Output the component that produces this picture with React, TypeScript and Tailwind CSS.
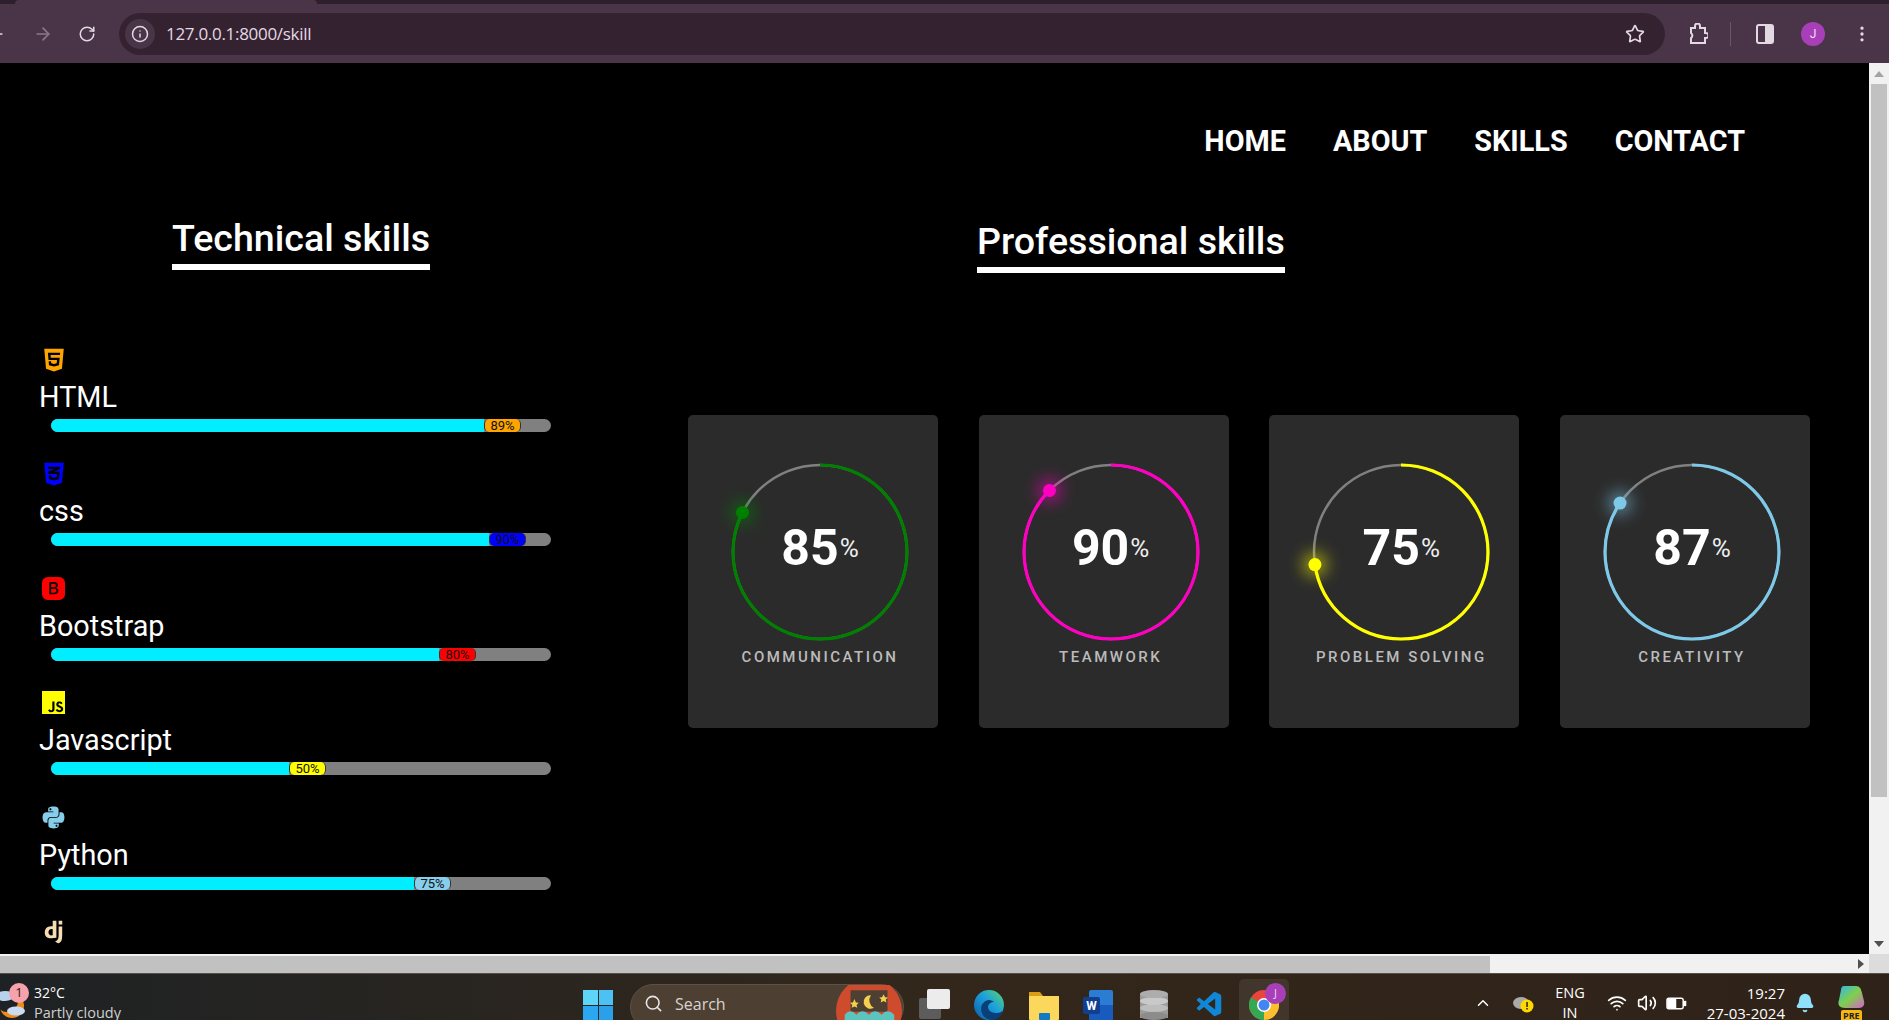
import { ArrowLeft, ArrowRight, RotateCw, Info, Star, MoreVertical, Search, ChevronUp, Wifi, Volume2, Bell } from 'lucide-react';
import { FaHtml5, FaCss3Alt, FaPython } from 'react-icons/fa';
import { BsBootstrapFill } from 'react-icons/bs';
import { SiJavascript } from 'react-icons/si';
import { BiLogoDjango } from 'react-icons/bi';
import { VscVscode } from 'react-icons/vsc';

const skills = [
  { name: 'HTML', pct: 89, icon: <FaHtml5 className="h-[26px] w-[26px] text-[#ffa500]" />, badge: 'bg-[#ffa500]' },
  { name: 'css', pct: 90, icon: <FaCss3Alt className="h-[26px] w-[26px] text-[#0000ff]" />, badge: 'bg-[#0000ff]' },
  { name: 'Bootstrap', pct: 80, icon: <BsBootstrapFill className="h-[23px] w-[23px] text-[#ff0000]" />, badge: 'bg-[#ff0000]' },
  { name: 'Javascript', pct: 50, icon: <SiJavascript className="h-[23px] w-[23px] text-[#ffff00]" />, badge: 'bg-[#ffff00]' },
  { name: 'Python', pct: 75, icon: <FaPython className="h-[25px] w-[25px] text-[#87ceeb]" />, badge: 'bg-[#87ceeb]' },
];

const cards = [
  { name: 'COMMUNICATION', pct: 85, shown: 82.5, color: '#008000' },
  { name: 'TEAMWORK', pct: 90, shown: 87.5, color: '#ff00c3' },
  { name: 'PROBLEM SOLVING', pct: 75, shown: 72.7, color: '#ffff00' },
  { name: 'CREATIVITY', pct: 87, shown: 84.5, color: '#7ec8e8' },
];

function SkillRow({ name, pct, icon, badge }: { name: string; pct: number; icon: React.ReactNode; badge: string }) {
  return (
    <div className="h-[114.4px] shrink-0">
      <div className="ml-[1px] flex h-[23px] w-[27px] items-center justify-center">{icon}</div>
      <div className="mt-[9px] text-[28.8px] leading-[34px] text-white">{name}</div>
      <div className="ml-[12px] mt-[5px] flex h-[13px] w-[500px] overflow-hidden rounded-full bg-[#808080]">
        <div className="h-full bg-[#00eeff]" style={{ width: pct * 5 - 12 }} />
        <div className={`flex h-full w-[37px] items-center justify-center rounded-[5px] border-x border-[#333] text-[13px] leading-none text-[#111] ${badge}`}>
          {pct}%
        </div>
      </div>
    </div>
  );
}

function SkillCard({ name, pct, shown, color }: { name: string; pct: number; shown: number; color: string }) {
  const angle = (shown / 100) * Math.PI * 2;
  const dotX = 89 + Math.sin(angle) * 87;
  const dotY = 89 - Math.cos(angle) * 87;
  return (
    <div className="h-[313px] w-[250px] shrink-0 rounded-[5px] bg-[#2b2b2b] pl-[43px] pt-[48px]">
      <div className="relative h-[178px] w-[178px]">
        <svg viewBox="0 0 178 178" className="h-[178px] w-[178px] overflow-visible">
          <circle cx="89" cy="89" r="87" fill="none" stroke="#808080" strokeWidth="2.5" />
          <circle
            cx="89"
            cy="89"
            r="87"
            fill="none"
            stroke={color}
            strokeWidth="3.2"
            pathLength={100}
            strokeDasharray={`${shown} 100`}
            transform="rotate(-90 89 89)"
          />
          <circle cx={dotX} cy={dotY} r="12" fill={color} opacity="0.55" className="blur-[8px]" />
          <circle cx={dotX} cy={dotY} r="6.5" fill={color} />
        </svg>
        <div className="absolute inset-0 flex items-center justify-center pb-[8px] text-white">
          <span className="text-[50px] font-bold leading-none">{pct}</span>
          <span className="ml-[1px] text-[26px] leading-none text-[#eee]">%</span>
        </div>
      </div>
      <div className="mt-[6px] w-[178px] whitespace-nowrap text-center text-[15px] font-medium leading-[20px] tracking-[2.5px] text-[#bbb]">{name}</div>
    </div>
  );
}

function ChromeBar() {
  return (
    <div className="h-[63px] shrink-0 bg-[#4a3548] text-[#e3d9e1]">
      <div className="h-[4px] bg-[#2e1f2d] pl-[15px]">
        <div className="h-full w-[302px] rounded-t-[4px] bg-[#4a3548]" />
      </div>
      <div className="flex h-[59px] items-center">
        <ArrowLeft className="ml-[-14px] h-[20px] w-[20px]" />
        <ArrowRight className="ml-[27px] h-[20px] w-[20px] text-[#8a7888]" />
        <RotateCw className="ml-[25px] h-[18px] w-[18px]" />
        <div className="ml-[23px] flex h-[42px] w-[1546px] items-center rounded-full bg-[#352231] pl-[6px]">
          <div className="flex h-[30px] w-[30px] items-center justify-center rounded-full bg-[#4a3548]">
            <Info className="h-[18px] w-[18px]" />
          </div>
          <span className="ml-[11px] font-['Open_Sans',sans-serif] text-[17px] tracking-[-0.3px]">127.0.0.1:8000/skill</span>
          <Star className="ml-auto mr-[20px] h-[20px] w-[20px]" />
        </div>
        <svg viewBox="0 0 20 22" className="ml-[23px] h-[22px] w-[20px]" fill="none" stroke="currentColor" strokeWidth="2">
          <path d="M3 5h4V3a2 2 0 0 1 5 0v2h5v5h1a2 2 0 0 1 0 5h-1v5H3v-5a3 3 0 0 0 0-5z" />
        </svg>
        <div className="ml-[22px] h-[24px] w-px bg-[#6a5668]" />
        <svg viewBox="0 0 18 20" className="ml-[25px] h-[20px] w-[18px]">
          <rect x="1" y="1" width="16" height="18" rx="2" fill="none" stroke="currentColor" strokeWidth="2" />
          <rect x="9" y="1" width="8" height="18" fill="currentColor" />
        </svg>
        <div className="ml-[27px] flex h-[24px] w-[24px] items-center justify-center rounded-full bg-[#a93fb8] text-[12px] text-[#f4dff6]">J</div>
        <MoreVertical className="ml-[27px] h-[20px] w-[20px]" />
      </div>
    </div>
  );
}

function Taskbar() {
  return (
    <div className="flex h-[46px] shrink-0 items-start overflow-hidden bg-gradient-to-r from-[#1e2224] via-[#33271b] to-[#2f2219] font-['Open_Sans',sans-serif] text-white">
      {/* weather */}
      <div className="relative h-full w-[140px] shrink-0">
        <svg viewBox="0 0 30 36" className="absolute left-0 top-[10px] h-[36px] w-[30px]">
          <circle cx="12" cy="22" r="12" fill="#f08a1d" />
          <circle cx="7" cy="17" r="11" fill="#1f2224" />
          <ellipse cx="5" cy="12" rx="9" ry="5" fill="#b8d2ee" />
          <ellipse cx="16" cy="27" rx="9" ry="4.5" fill="#c9dcf3" />
        </svg>
        <div className="absolute left-[9px] top-[9px] flex h-[20px] w-[20px] items-center justify-center rounded-full bg-[#f7a1ac] text-[13px] text-[#222]">1</div>
        <div className="absolute left-[34px] top-[9px] whitespace-nowrap text-[14px] leading-[20px]">32°C</div>
        <div className="absolute left-[34px] top-[29px] whitespace-nowrap text-[14.5px] leading-[20px] text-[#cfcfcf]">Partly cloudy</div>
      </div>
      {/* start + search */}
      <div className="ml-[443px] mt-[16px] grid h-[30px] w-[30px] shrink-0 grid-cols-2 gap-[1px]">
        <div className="bg-[#5fd4f9]" />
        <div className="bg-[#4cc2f4]" />
        <div className="bg-[#2aa7ee]" />
        <div className="bg-[#2aa0ea]" />
      </div>
      <div className="ml-[17px] mt-[10px] flex h-[46px] w-[274px] shrink-0 items-start rounded-full border border-[#5e5142] bg-[#4d4033] pl-[13px] pt-[9px]">
        <Search className="h-[19px] w-[19px] text-[#e8e8e8]" />
        <span className="ml-[12px] text-[16px] leading-[20px] text-[#d8d4ce]">Search</span>
        <svg viewBox="0 0 70 36" className="ml-auto mr-0 mt-[-9px] h-[36px] w-[68px]">
          <circle cx="35" cy="26" r="34" fill="#cf4b2d" />
          <path d="M16 5h38v22H16z" fill="#4d4033" />
          <path d="M37 10a7 7 0 1 0 3 13 9 9 0 0 1-3-13z" fill="#f5cf4f" />
          <path d="M20 14l1.500 3.500 3 .3-2.300 2.200.7 3-2.900-1.500-2.900 1.500.7-3-2.300-2.200 3-.3zM50 9l1.500 3 3 .4-2.200 2 .6 3-2.900-1.400-2.900 1.400.6-3-2.200-2 3-.4z" fill="#f5cf4f" />
          <path d="M10 30q6-7 12 0q6-7 13 0q6-7 13 0q6-7 13 0v10H10z" fill="#5cc4bf" />
        </svg>
      </div>
      {/* pinned apps */}
      <svg viewBox="0 0 32 30" className="ml-[15px] mt-[15px] h-[30px] w-[32px] shrink-0">
        <rect x="0" y="9" width="22" height="21" rx="2" fill="#5c5c5c" />
        <rect x="8" y="0" width="23" height="20" rx="2" fill="#ececec" />
      </svg>
      <svg viewBox="0 0 30 30" className="ml-[23px] mt-[16px] h-[30px] w-[30px] shrink-0">
        <defs>
          <linearGradient id="edgeFill" x1="0" y1="1" x2="1" y2="0">
            <stop offset="0" stopColor="#0c59a4" />
            <stop offset="0.55" stopColor="#1ba0dd" />
            <stop offset="1" stopColor="#5fd66b" />
          </linearGradient>
        </defs>
        <circle cx="15" cy="15" r="15" fill="url(#edgeFill)" />
        <path d="M30 17c0 4-4 6-8 6-5 0-8-3-8-6 0-3 3-5 6-5-1-1-3-2-5-2-4 0-8 4-8 9 0 4 3 11 11 11 4 0 7-2 9-5z" fill="#0a3f78" />
      </svg>
      <svg viewBox="0 0 30 30" className="ml-[25px] mt-[16px] h-[30px] w-[30px] shrink-0">
        <path d="M0 2h11l3 4H30v5H0z" fill="#d99e16" />
        <rect x="0" y="6" width="30" height="24" rx="1" fill="#fbd75b" />
        <rect x="10" y="23" width="11" height="7" rx="1" fill="#1479c4" />
      </svg>
      <svg viewBox="0 0 30 30" className="ml-[24px] mt-[16px] h-[30px] w-[30px] shrink-0">
        <rect x="6" y="0" width="24" height="30" rx="2" fill="#2b7cd3" />
        <rect x="6" y="15" width="24" height="15" fill="#185abd" />
        <rect x="0" y="7" width="17" height="17" rx="2" fill="#103f91" />
        <text x="8.500" y="20" textAnchor="middle" fontSize="12" fontWeight="700" fill="#fff" fontFamily="Roboto, sans-serif">W</text>
      </svg>
      <svg viewBox="0 0 30 30" className="ml-[26px] mt-[16px] h-[30px] w-[30px] shrink-0">
        <rect x="1" y="4" width="28" height="24" fill="#9b9b9b" />
        <ellipse cx="15" cy="26" rx="14" ry="4" fill="#8c8c8c" />
        <ellipse cx="15" cy="18" rx="14" ry="4" fill="#bdbdbd" />
        <ellipse cx="15" cy="11" rx="14" ry="4" fill="#c9c9c9" />
        <ellipse cx="15" cy="4" rx="14" ry="4" fill="#adadad" />
      </svg>
      <VscVscode className="ml-[26px] mt-[16px] h-[30px] w-[30px] shrink-0 text-[#0f86d6]" />
      <div className="relative ml-[14px] mt-[5px] h-[41px] w-[50px] shrink-0 rounded-t-[5px] bg-[#ffffff14]">
        <svg viewBox="0 0 30 30" className="absolute left-[10px] top-[11px] h-[30px] w-[30px]">
          <circle cx="15" cy="15" r="15" fill="#e8453c" />
          <path d="M15 15L2 22.500A15 15 0 0 0 15 30z" fill="#34a853" />
          <path d="M2 22.500A15 15 0 0 1 2 7.500L15 15z" fill="#34a853" />
          <path d="M15 15L15 30A15 15 0 0 0 28 7.500z" fill="#fbc02d" />
          <circle cx="15" cy="15" r="7" fill="#fff" />
          <circle cx="15" cy="15" r="5.500" fill="#4285f4" />
        </svg>
        <div className="absolute left-[26px] top-[4px] flex h-[21px] w-[21px] items-center justify-center rounded-full bg-[#a93fb8] text-[11px] text-[#f0d5f3]">J</div>
      </div>
      {/* tray */}
      <ChevronUp className="ml-[185px] mt-[20px] h-[18px] w-[18px] shrink-0" />
      <svg viewBox="0 0 22 20" className="ml-[20px] mt-[19px] h-[20px] w-[22px] shrink-0">
        <ellipse cx="9" cy="10" rx="8" ry="6" fill="#a9a9a9" />
        <circle cx="15" cy="13" r="6.500" fill="#ffd800" />
        <rect x="14.300" y="9" width="1.500" height="5" fill="#222" />
        <rect x="14.300" y="15" width="1.500" height="1.500" fill="#222" />
      </svg>
      <div className="ml-[20px] mt-[9px] w-[32px] shrink-0 text-center text-[14.5px] leading-[20px]">
        <div>ENG</div>
        <div>IN</div>
      </div>
      <Wifi className="ml-[21px] mt-[19px] h-[20px] w-[20px] shrink-0" />
      <Volume2 className="ml-[10px] mt-[19px] h-[20px] w-[20px] shrink-0" />
      <svg viewBox="0 0 22 16" className="ml-[9px] mt-[21px] h-[16px] w-[21px] shrink-0" fill="none" stroke="#fff" strokeWidth="1.500">
        <rect x="1" y="3" width="17" height="11" rx="2" />
        <rect x="18.500" y="6.500" width="2" height="4" fill="#fff" />
        <path d="M2 4h8v9H2z" fill="#fff" />
      </svg>
      <div className="ml-[18px] mt-[9px] w-[80px] shrink-0 whitespace-nowrap text-right text-[15px] leading-[20px]">
        <div>19:27</div>
        <div>27-03-2024</div>
      </div>
      <Bell className="ml-[10px] mt-[19px] h-[20px] w-[20px] shrink-0 fill-[#8ee0fb] text-[#8ee0fb]" />
      <div className="relative ml-[21px] mt-[10px] h-[30px] w-[30px] shrink-0">
        <svg viewBox="0 0 30 28" className="h-[28px] w-[30px]">
          <defs>
            <linearGradient id="copilotFill" x1="0" y1="0" x2="1" y2="1">
              <stop offset="0" stopColor="#2fb5f0" />
              <stop offset="0.5" stopColor="#7fd04a" />
              <stop offset="1" stopColor="#d85fd0" />
            </linearGradient>
          </defs>
          <path d="M8 2h12c4 0 5 3 6 7l2 8c1 4-1 7-5 7H9c-5 0-8-3-6-8l2-10c0-2 1-4 3-4z" fill="url(#copilotFill)" />
        </svg>
        <div className="absolute bottom-[-8px] left-[5px] rounded-[2px] bg-[#f7b90f] px-[2px] text-[9px] font-bold leading-[12px] text-[#222]">PRE</div>
      </div>
    </div>
  );
}

export default function App() {
  return (
    <div className="flex h-[1020px] w-full flex-col overflow-hidden bg-black font-['Roboto',sans-serif]">
      <ChromeBar />

      <div className="flex min-h-0 flex-1">
        <div className="min-w-0 flex-1 overflow-hidden bg-black">
          {/* Nav */}
          <nav className="flex h-[95px] items-end justify-end gap-[47px] pr-[124px] text-[28.8px] font-bold leading-[34px] text-white">
            <a>HOME</a>
            <a>ABOUT</a>
            <a>SKILLS</a>
            <a>CONTACT</a>
          </nav>

          <div className="flex">
            {/* Technical skills */}
            <div className="w-[648px] shrink-0 pl-[39px]">
              <h2 className="ml-[133px] mt-[57px] w-fit whitespace-nowrap border-b-[6px] border-white pb-[3px] text-[37.6px] font-medium leading-[46px] text-white">Technical skills</h2>
              <div className="mt-[78px]">
                {skills.map((s) => (
                  <SkillRow key={s.name} {...s} />
                ))}
                <div className="ml-[1px] flex h-[24px] w-[27px] items-center justify-center">
                  <BiLogoDjango className="h-[30px] w-[30px] text-[#f5deb3]" />
                </div>
              </div>
            </div>

            {/* Professional skills */}
            <div className="min-w-0 flex-1">
              <h2 className="ml-[329px] mt-[60px] w-fit whitespace-nowrap border-b-[6px] border-white pb-[3px] text-[37.6px] font-medium leading-[46px] text-white">Professional skills</h2>
              <div className="ml-[40px] mt-[142px] flex gap-[40.67px]">
                {cards.map((c) => (
                  <SkillCard key={c.name} {...c} />
                ))}
              </div>
            </div>
          </div>
        </div>

        {/* Vertical scrollbar */}
        <div className="flex w-[20px] shrink-0 flex-col items-center bg-[#f1f1f1]">
          <div className="flex h-[21px] items-center justify-center">
            <div className="h-0 w-0 border-x-[5px] border-b-[6px] border-x-transparent border-b-[#a3a3a3]" />
          </div>
          <div className="h-[713px] w-[16px] bg-[#c1c1c1]" />
          <div className="mt-auto flex h-[21px] items-center justify-center">
            <div className="h-0 w-0 border-x-[5px] border-t-[6px] border-x-transparent border-t-[#505050]" />
          </div>
        </div>
      </div>

      {/* Horizontal scrollbar */}
      <div className="flex h-[20px] shrink-0 border-b border-[#55504a] bg-[#f1f1f1]">
        <div className="mt-[2px] w-[1490px] bg-[#c1c1c1]" />
        <div className="ml-auto flex h-full w-[6px] items-center">
          <div className="h-0 w-0 border-y-[5px] border-l-[6px] border-y-transparent border-l-[#505050]" />
        </div>
        <div className="ml-[5px] h-full w-[20px] bg-[#dcdcdc]" />
      </div>

      <Taskbar />
    </div>
  );
}
